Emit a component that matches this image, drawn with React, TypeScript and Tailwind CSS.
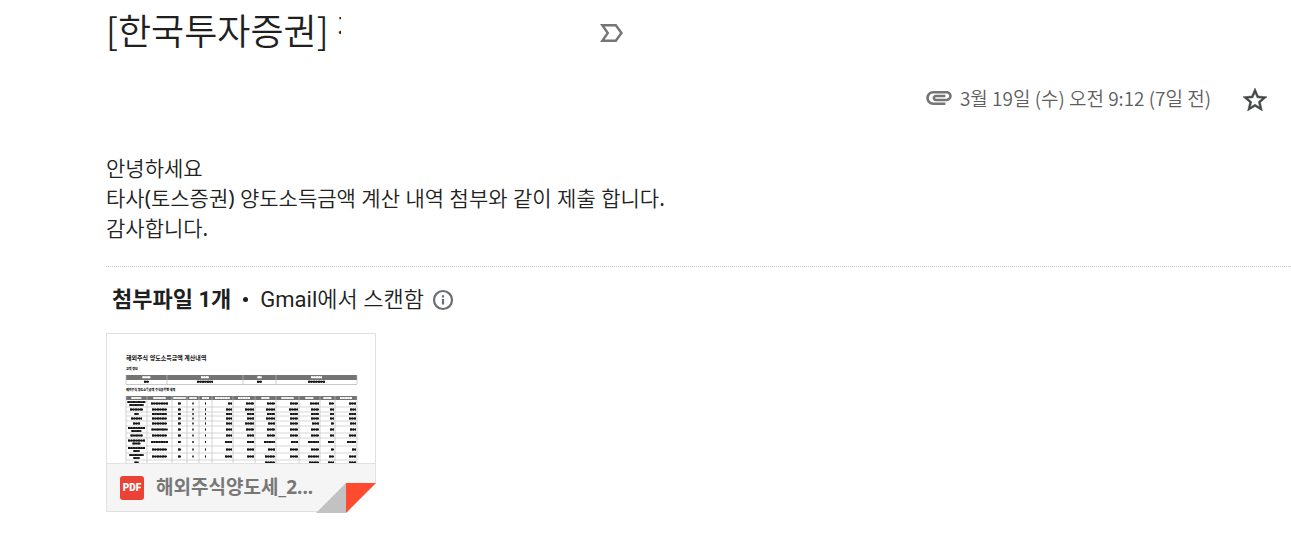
import React from "react";

const HOLDINGS_COLUMNS = [126, 147, 172, 187, 199, 212, 233, 255, 276, 299, 320, 335, 357];

type Holding = {
  top: number;
  bottom: number;
  nameLines: number[];
  widths: number[];
};

const HOLDINGS: Holding[] = [
  { top: 400, bottom: 407, nameLines: [18, 14], widths: [17, 3, 1, 1, 4, 8, 8, 8, 9, 5, 7] },
  { top: 407, bottom: 412, nameLines: [13], widths: [15, 3, 1, 1, 6, 9, 9, 9, 8, 4, 6] },
  { top: 412, bottom: 416, nameLines: [4], widths: [15, 3, 1, 1, 6, 7, 8, 8, 8, 4, 7] },
  { top: 416, bottom: 421, nameLines: [11], widths: [15, 3, 1, 1, 6, 7, 9, 8, 8, 4, 7] },
  { top: 421, bottom: 426, nameLines: [7], widths: [15, 3, 1, 1, 6, 9, 7, 8, 7, 3, 6] },
  { top: 426, bottom: 433, nameLines: [17, 10], widths: [16, 3, 1, 1, 6, 8, 8, 8, 8, 4, 6] },
  { top: 433, bottom: 438, nameLines: [12], widths: [15, 3, 1, 1, 6, 7, 8, 8, 8, 4, 7] },
  { top: 438, bottom: 446, nameLines: [17, 8], widths: [17, 3, 1, 1, 7, 7, 11, 7, 11, 6, 9] },
  { top: 446, bottom: 453, nameLines: [17, 6], widths: [15, 3, 1, 1, 6, 7, 7, 8, 8, 3, 4] },
  { top: 453, bottom: 460, nameLines: [14, 6], widths: [15, 3, 1, 1, 7, 7, 10, 8, 11, 5, 7] },
  { top: 460, bottom: 465, nameLines: [4], widths: [0, 0, 0, 0, 0, 0, 10, 0, 10, 6, 7] },
];

const SUMMARY_COLUMNS = [126, 167, 243, 276, 357];

function TinyLine({ x, y, width, color = "#151515" }: { x: number; y: number; width: number; color?: string }) {
  return (
    <g stroke={color}>
      <line x1={x} x2={x + width} y1={y} y2={y} strokeWidth={1.6} />
      <line x1={x} x2={x + width} y1={y} y2={y} strokeWidth={2} strokeDasharray="2.3 0.7 1.1 0.9" />
    </g>
  );
}

function DocumentPreview() {
  return (
    <svg
      viewBox="107 334 268 129"
      className="block h-[129px] w-full bg-white"
      fontFamily='"Noto Sans", "Noto Sans CJK KR", sans-serif'
      role="img"
      aria-label="해외주식 양도소득금액 계산내역"
    >
      <text x="126" y="360" fontSize="6" fontWeight="700" fill="#111">해외주식 양도소득금액 계산내역</text>
      <text x="126" y="370" fontSize="3" fontWeight="900" fill="#000">고객 정보</text>

      <rect x="126" y="375" width="231" height="5" fill="#747474" />
      <path d="M126 384.5H357" stroke="#c8c8c8" />
      {SUMMARY_COLUMNS.map((x) => (
        <path key={x} d={`M${x} 375V384`} stroke="#bbb" strokeWidth="0.7" />
      ))}
      {[8, 8, 4, 11].map((w, i) => {
        const mid = (SUMMARY_COLUMNS[i] + SUMMARY_COLUMNS[i + 1]) / 2;
        const value = [5, 16, 5, 17][i];
        return (
          <g key={i}>
            <TinyLine x={mid - w / 2} y={377.3} width={w} color="#fff" />
            <TinyLine x={mid - value / 2} y={381.7} width={value} />
          </g>
        );
      })}

      <text x="126" y="391" fontSize="3" fontWeight="900" fill="#000">해외주식 양도소득금액 주식종목별 내역</text>

      <rect x="126" y="396" width="231" height="4" fill="#747474" />
      {HOLDINGS_COLUMNS.slice(0, -1).map((x, i) => {
        const w = [10, 12, 12, 7, 7, 15, 12, 8, 12, 8, 8, 12][i];
        const mid = (x + HOLDINGS_COLUMNS[i + 1]) / 2;
        return <TinyLine key={x} x={mid - w / 2} y={398} width={w} color="#f5f5f5" />;
      })}
      {HOLDINGS_COLUMNS.map((x) => (
        <path key={x} d={`M${x} 396V463`} stroke="#bdbdbd" strokeWidth="0.7" />
      ))}
      {HOLDINGS.map((row) => {
        const mid = (row.top + row.bottom) / 2;
        return (
          <g key={row.top}>
            <path d={`M126 ${row.bottom}H357`} stroke="#c4c4c4" strokeWidth="0.7" />
            {row.nameLines.map((w, i) => (
              <TinyLine
                key={i}
                x={136.5 - w / 2}
                y={row.nameLines.length === 1 ? mid : mid - 1.4 + i * 2.9}
                width={w}
              />
            ))}
            {row.widths.map((w, i) => {
              if (w === 0) return null;
              const left = HOLDINGS_COLUMNS[i + 1];
              const right = HOLDINGS_COLUMNS[i + 2];
              const x = i < 4 ? (left + right - w) / 2 : right - 1 - w;
              return <TinyLine key={i} x={x} y={mid} width={w} />;
            })}
          </g>
        );
      })}
    </svg>
  );
}

export default function App() {
  return (
    <main className="min-h-screen bg-white pl-[106px] pt-2 font-['Noto_Sans','Noto_Sans_CJK_KR_DemiLight','Noto_Sans_CJK_KR',sans-serif] text-[#222]">
      <header className="flex h-12 items-center">
        <h1 className="h-12 w-[235px] overflow-hidden whitespace-nowrap font-['Noto_Sans_CJK_KR_DemiLight','Noto_Sans_CJK_KR',sans-serif] text-[36px] leading-[42px] font-normal text-[#1f1f1f]">
          [한국투자증권] 정
        </h1>
        <button type="button" aria-label="중요" className="ml-[259px] pt-0.5">
          <svg viewBox="0 0 23 18" className="block h-[18px] w-[23px]" fill="none" stroke="#757575" strokeWidth="2.4">
            <path d="M2.3 1.2H15.8L21.5 9L15.8 16.8H2.3L7.8 9Z" />
          </svg>
        </button>
      </header>

      <div className="mt-[26px] flex h-8 items-center justify-end pr-6 text-[#5e5e5e]">
        <svg viewBox="2 7 20 11" className="mr-2 h-3.5 w-[26px]" fill="#757575" aria-hidden="true">
          <path d="M2 12.5C2 9.46 4.46 7 7.5 7H18c2.21 0 4 1.79 4 4s-1.79 4-4 4H9.5C8.12 15 7 13.88 7 12.5S8.12 10 9.5 10H17v2H9.41c-.55 0-.55 1 0 1H18c1.1 0 2-.9 2-2s-.9-2-2-2H7.5C5.57 9 4 10.57 4 12.5S5.57 16 7.5 16H17v2H7.5C4.46 18 2 15.54 2 12.5z" />
        </svg>
        <time className="font-['Noto_Sans_CJK_KR_DemiLight','Noto_Sans_CJK_KR',sans-serif] text-[19px] leading-8">
          3월 19일 (수) 오전 9:12 (7일 전)
        </time>
        <button type="button" aria-label="별표" className="ml-8 pt-0.5">
          <svg viewBox="2 2 20 19" className="block h-[23px] w-6" fill="#444746" stroke="#444746" strokeWidth="0.4">
            <path d="M22 9.24l-7.19-.62L12 2 9.19 8.63 2 9.24l5.46 4.73L5.82 21 12 17.27 18.18 21l-1.63-7.03L22 9.24zM12 15.4l-3.76 2.27 1-4.28-3.32-2.88 4.38-.38L12 6.1l1.71 4.04 4.38.38-3.32 2.88 1 4.28L12 15.4z" />
          </svg>
        </button>
      </div>

      <article className="mt-[39px] pb-[23px] text-[21px] leading-[30px]">
        <p>안녕하세요</p>
        <p>타사(토스증권) 양도소득금액 계산 내역 첨부와 같이 제출 합니다.</p>
        <p>감사합니다.</p>
      </article>

      <section className="border-t border-dotted border-[#c4c4c4]">
        <div className="flex h-16 items-center pl-1.5 font-['Roboto','Noto_Sans_CJK_KR_DemiLight','Noto_Sans_CJK_KR',sans-serif] text-[22px] text-[#1f1f1f]">
          <h2 className="font-['Roboto','Noto_Sans_CJK_KR',sans-serif] font-bold">첨부파일 1개</h2>
          <span className="mx-3 size-[5px] rounded-full bg-[#1f1f1f]" />
          <span>Gmail에서 스캔함</span>
          <button type="button" aria-label="스캔 정보" className="ml-2 pt-0.5">
            <svg viewBox="0 0 22 22" className="block size-[22px]" fill="none" stroke="#6b6e72" strokeWidth="2.2">
              <circle cx="11" cy="11" r="9" />
              <path d="M11 10v5.5M11 6.3v2.2" />
            </svg>
          </button>
        </div>

        <a href="#attachment" className="relative mt-0.5 block w-[270px] border border-[#e0e0e0] bg-[#f5f5f5]">
          <DocumentPreview />
          <span className="flex h-12 items-center border-t border-[#e2e2e2] pl-[13px]">
            <span className="flex size-6 items-center justify-center rounded-[3px] bg-[#ea4335] font-['Roboto',sans-serif] text-[10px] leading-none font-black text-white">
              PDF
            </span>
            <span className="ml-3 whitespace-nowrap pb-0.5 font-['Noto_Sans','Noto_Sans_CJK_KR',sans-serif] text-[19px] leading-7 font-bold text-[#777]">
              해외주식양도세_2...
            </span>
          </span>
          <svg viewBox="0 0 60 30" className="absolute -right-px -bottom-0.5 h-[30px] w-[60px]" aria-hidden="true">
            <path d="M30 30H60V0Z" fill="#fff" />
            <path d="M0 30L30 0V30Z" fill="#c2c2c2" />
            <path d="M30 0H60L30 30Z" fill="#ff4b30" />
          </svg>
        </a>
      </section>
    </main>
  );
}
